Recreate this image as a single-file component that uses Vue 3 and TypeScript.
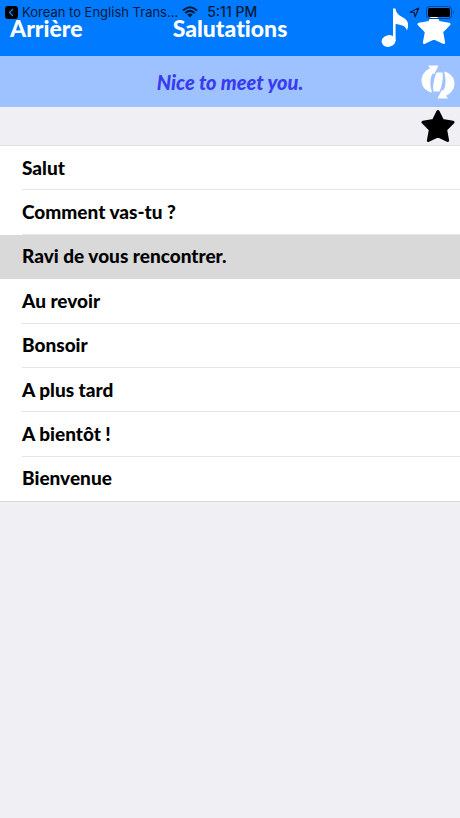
<script setup lang="ts">
import { ref } from 'vue'

interface Phrase {
  text: string
  translation: string
}

const phrases: Phrase[] = [
  { text: 'Salut', translation: 'Hi.' },
  { text: 'Comment vas-tu ?', translation: 'How are you?' },
  { text: 'Ravi de vous rencontrer.', translation: 'Nice to meet you.' },
  { text: 'Au revoir', translation: 'Goodbye.' },
  { text: 'Bonsoir', translation: 'Good evening.' },
  { text: 'A plus tard', translation: 'See you later.' },
  { text: 'A bientôt !', translation: 'See you soon!' },
  { text: 'Bienvenue', translation: 'Welcome.' },
]

const selected = ref(2)
const starPath =
  'M17 2.5 L21.6 11.6 L32 13.2 L24.6 20.6 L26.6 31.5 L17 26.8 L7.4 31.5 L9.4 20.6 L2 13.2 L12.4 11.6 Z'
</script>

<template>
  <div class="screen">
    <div class="status">
      <a class="return" href="#">
        <svg width="13" height="13" viewBox="0 0 13 13" aria-hidden="true">
          <rect width="13" height="13" rx="3" fill="#000" />
          <path d="M8 3 L4.5 6.5 L8 10" fill="none" stroke="#1c7ef0" stroke-width="1.3" />
        </svg>
        <span>Korean to English Trans...</span>
      </a>
      <svg class="wifi" width="16" height="12" viewBox="0 0 16 12" aria-hidden="true">
        <path d="M1 4.4 Q8 -2 15 4.4 M3.4 7 Q8 2.8 12.6 7" fill="none" stroke="#001a38" stroke-width="2" />
        <path d="M5.2 8.6 Q8 6.4 10.8 8.6 L8 11.5 Z" fill="#001a38" />
      </svg>
      <span class="time">5:11 PM</span>
      <svg class="location" width="11" height="11" viewBox="0 0 11 11" aria-hidden="true">
        <path d="M9.8 1 L1 5.2 L5.3 5.6 L6 10 Z" fill="none" stroke="#001a38" stroke-width="1.1" stroke-linejoin="round" />
      </svg>
      <svg class="battery" width="29" height="13" viewBox="0 0 29 13" aria-hidden="true">
        <rect x="0.5" y="0.5" width="25" height="12" rx="3" fill="none" stroke="#0b4390" />
        <rect x="2" y="2" width="22" height="9" rx="1.5" fill="#000" />
        <path d="M27 4.5 Q29 6.5 27 8.5 Z" fill="#0b4390" />
      </svg>
    </div>

    <header class="nav">
      <button class="back" type="button">Arrière</button>
      <h1>Salutations</h1>
      <div class="actions">
        <button type="button" aria-label="Musique">
          <svg width="28" height="40" viewBox="0 0 28 40" aria-hidden="true">
            <ellipse cx="7.6" cy="33" rx="7" ry="5.8" transform="rotate(-15 7.6 33)" fill="#fff" />
            <path d="M12 33 L12 0.5 L14.5 0.5 C15 6 19 7.6 23 10 C27.5 13 28 17 26 22.5 C25 18 20 16.6 14.6 16 L14.6 33 Z" fill="#fff" />
          </svg>
        </button>
        <button type="button" aria-label="Favoris">
          <svg width="34" height="34" viewBox="0 0 34 34" aria-hidden="true">
            <path :d="starPath" fill="#fff" stroke="#fff" stroke-width="3" stroke-linejoin="round" />
          </svg>
        </button>
      </div>
    </header>

    <section class="banner">
      <p>{{ phrases[selected].translation }}</p>
      <button type="button" aria-label="Inverser">
        <svg width="34" height="34" viewBox="0 0 34 34" aria-hidden="true">
          <g fill="#fff">
            <path d="M7 0.5 H17.5 L13 9.5 L12 8.2 C8.8 12 8.8 20 11 27.5 C5 26.5 0.5 21.5 0.5 15.5 C0.5 10 4 5.5 9 3.2 Z" />
            <path d="M27 33.5 H16.5 L21 24.5 L22 25.8 C25.2 22 25.2 14 23 6.5 C29 7.5 33.5 12.5 33.5 18.5 C33.5 24 30 28.5 25 30.8 Z" />
            <path d="M15.5 7.5 H21.5 C22.5 14 20.8 21 18.5 26.5 H12.5 C11.5 20 13.2 13 15.5 7.5 Z" />
          </g>
        </svg>
      </button>
    </section>

    <div class="tools">
      <button type="button" aria-label="Ajouter aux favoris">
        <svg width="34" height="34" viewBox="0 0 34 34" aria-hidden="true">
          <path :d="starPath" fill="#000" stroke="#000" stroke-width="3" stroke-linejoin="round" />
        </svg>
      </button>
    </div>

    <ul class="list">
      <li v-for="(phrase, index) in phrases" :key="phrase.text" :class="{ active: index === selected }">
        <button type="button" @click="selected = index">{{ phrase.text }}</button>
      </li>
    </ul>
  </div>
</template>

<style>
body {
  background: #efeff4;
}
</style>

<style scoped>
.screen {
  position: relative;
  min-height: 100vh;
  background: #efeff4;
  color: #000;
  font-family: Lato, 'Liberation Sans', sans-serif;
  font-weight: 900;
  font-variant-ligatures: none;
}

button {
  padding: 0;
  border: 0;
  background: none;
  color: inherit;
  font: inherit;
  font-variant-ligatures: none;
  cursor: pointer;
}

svg {
  display: block;
}

.status {
  position: absolute;
  inset: 0 0 auto;
  display: flex;
  align-items: center;
  height: 24px;
  padding: 0 5px;
  color: #001a38;
  font: 400 13px/24px Inter, sans-serif;
  white-space: nowrap;
}

.return {
  display: flex;
  align-items: center;
  gap: 4px;
  color: inherit;
  text-decoration: none;
}

.wifi {
  margin-left: 4px;
}

.time {
  margin-left: 9px;
  font-size: 14px;
  font-weight: 500;
}

.location {
  margin-left: auto;
}

.battery {
  margin-left: 6px;
}

.nav {
  display: grid;
  grid-template-columns: 1fr auto 1fr;
  align-items: center;
  height: 56px;
  background: #007aff;
  color: #fff;
  font-size: 23px;
  line-height: 28px;
}

.back {
  justify-self: start;
  padding-left: 10px;
}

h1 {
  margin: 0;
  font: inherit;
  font-variant-ligatures: none;
}

.actions {
  display: flex;
  align-items: center;
  justify-content: flex-end;
  gap: 8px;
  padding-right: 9px;
}

.banner {
  display: grid;
  grid-template-columns: 1fr auto 1fr;
  align-items: center;
  height: 51px;
  background: #9dc2ff;
  color: #3a3aee;
}

.banner p {
  grid-column: 2;
  margin: 0;
  font-size: 20px;
  font-style: italic;
  line-height: 24px;
}

.banner button {
  justify-self: end;
  padding-right: 5px;
}

.tools {
  display: flex;
  align-items: center;
  justify-content: flex-end;
  height: 38px;
  padding-right: 5px;
  border-bottom: 1px solid #dfdfe3;
}

.list {
  display: grid;
  grid-auto-rows: 1fr;
  min-height: 355px;
  margin: 0;
  padding: 0;
  border-bottom: 1px solid #d9d9dd;
  background: #fff;
  list-style: none;
}

.list li {
  display: flex;
  padding-left: 22px;
}

.list button {
  flex: 1;
  border-bottom: 1px solid #e6e6e8;
  font-size: 19px;
  line-height: 24px;
  text-align: left;
}

.list li:last-child button,
.list .active button {
  border-bottom-color: transparent;
}

.list .active {
  background: #d9d9d9;
}
</style>
